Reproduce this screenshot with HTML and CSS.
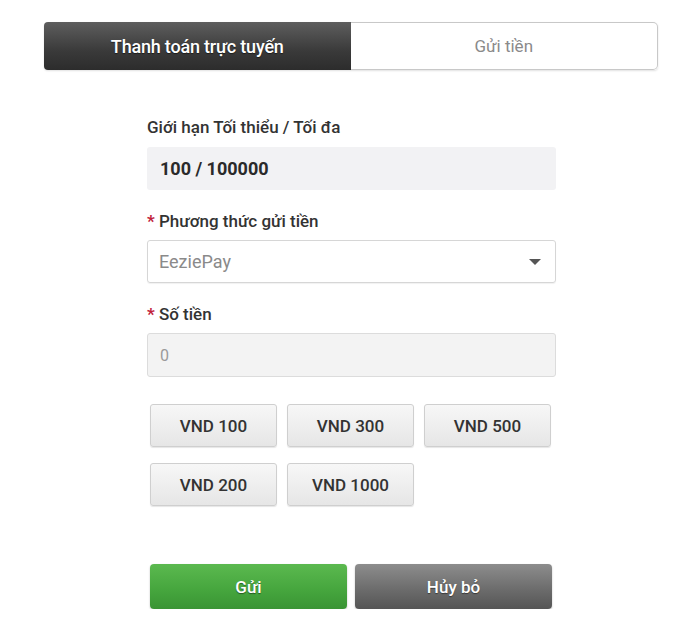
FILE: index.html
```html
<!DOCTYPE html>
<html lang="vi">
<head>
<meta charset="utf-8">
<link rel="stylesheet" href="styles.css">
</head>
<body>
<div class="page">
  <div class="tabs">
    <div class="tab tab-active">Thanh toán trực tuyến</div>
    <div class="tab tab-idle">Gửi tiền</div>
  </div>
  <div class="form">
    <div class="label label-first">Giới hạn Tối thiểu / Tối đa</div>
    <div class="limit-box">100 / 100000</div>

    <div class="label"><span class="req">*</span> Phương thức gửi tiền</div>
    <div class="select">
      <span class="select-text">EeziePay</span>
      <span class="caret"></span>
    </div>

    <div class="label"><span class="req">*</span> Số tiền</div>
    <div class="amount-input">0</div>

    <div class="quick">
      <button class="qbtn">VND 100</button>
      <button class="qbtn">VND 300</button>
      <button class="qbtn">VND 500</button>
      <button class="qbtn">VND 200</button>
      <button class="qbtn">VND 1000</button>
    </div>

    <div class="actions">
      <button class="abtn abtn-send">Gửi</button>
      <button class="abtn abtn-cancel">Hủy bỏ</button>
    </div>
  </div>
</div>
</body>
</html>
```

FILE: styles.css
```css
html, body {
  margin: 0;
  padding: 0;
  background: #ffffff;
  font-family: Roboto, "Liberation Sans", Arial, sans-serif;
  color: #333;
}

.page {
  padding: 22px 0 0 44px;
}

.tabs {
  display: flex;
  width: 614px;
  height: 48px;
  border-radius: 4px;
  box-shadow: 0 1px 2px rgba(0,0,0,0.12);
}

.tab {
  flex: 1;
  display: flex;
  align-items: center;
  justify-content: center;
}

.tab-active {
  background: linear-gradient(#5e5e5e, #3a3a3a 60%, #2c2c2c);
  color: #fff;
  font-size: 18px;
  font-weight: 500;
  letter-spacing: -0.2px;
  border-radius: 4px 0 0 4px;
  text-shadow: 0 1px 1px rgba(0,0,0,0.5);
}

.tab-idle {
  background: #fff;
  color: #8a8a8a;
  font-size: 17px;
  border: 1px solid #c8c8c8;
  border-left: none;
  border-radius: 0 5px 5px 0;
}

.form {
  margin-left: 103px;
  width: 409px;
  display: flex;
  flex-direction: column;
}

.label {
  font-size: 17px;
  line-height: 20px;
  font-weight: 500;
  color: #333;
  margin-top: 21px;
  margin-bottom: 9px;
}

.label-first {
  margin-top: 47px;
  margin-bottom: 10px;
}

.req {
  color: #c0223a;
  font-weight: 700;
}

.limit-box {
  height: 43px;
  background: #f2f2f4;
  border-radius: 3px;
  display: flex;
  align-items: center;
  padding-left: 13px;
  font-size: 18px;
  font-weight: 700;
  color: #2a2a2a;
}

.select {
  height: 41px;
  border: 1px solid #d6d6d6;
  border-radius: 3px;
  display: flex;
  align-items: center;
  justify-content: space-between;
  padding: 0 14px 0 11px;
  box-shadow: 0 1px 1px rgba(0,0,0,0.06);
}

.select-text {
  font-size: 18px;
  color: #8a8a8a;
}

.caret {
  width: 0;
  height: 0;
  border-left: 6px solid transparent;
  border-right: 6px solid transparent;
  border-top: 6px solid #555;
}

.amount-input {
  height: 42px;
  border: 1px solid #dcdcdc;
  border-radius: 3px;
  background: #f3f3f3;
  display: flex;
  align-items: center;
  padding-left: 12px;
  font-size: 16px;
  color: #9a9a9a;
}

.quick {
  display: grid;
  grid-template-columns: repeat(3, 127px);
  column-gap: 10px;
  row-gap: 16px;
  margin-top: 27px;
  margin-left: 3px;
}

.qbtn {
  height: 43px;
  border: 1px solid #cfcfcf;
  border-radius: 3px;
  background: linear-gradient(#f7f7f7, #e6e6e6);
  box-shadow: 0 1px 1px rgba(0,0,0,0.1);
  font-family: Roboto, "Liberation Sans", Arial, sans-serif;
  font-size: 17px;
  font-weight: 500;
  color: #333;
  padding: 0;
}

.actions {
  display: flex;
  gap: 8px;
  margin-top: 58px;
  margin-left: 3px;
}

.abtn {
  width: 197px;
  height: 45px;
  border: none;
  border-radius: 4px;
  font-family: Roboto, "Liberation Sans", Arial, sans-serif;
  font-size: 17px;
  font-weight: 500;
  color: #fff;
  text-shadow: 0 1px 1px rgba(0,0,0,0.45);
  padding: 0;
}

.abtn-send {
  background: linear-gradient(#5bb94f, #45a53d 60%, #3a9434);
  box-shadow: 0 1px 2px rgba(0,0,0,0.25);
}

.abtn-cancel {
  background: linear-gradient(#8d8d8d, #6a6a6a 60%, #555);
  box-shadow: 0 1px 2px rgba(0,0,0,0.25);
}
```
